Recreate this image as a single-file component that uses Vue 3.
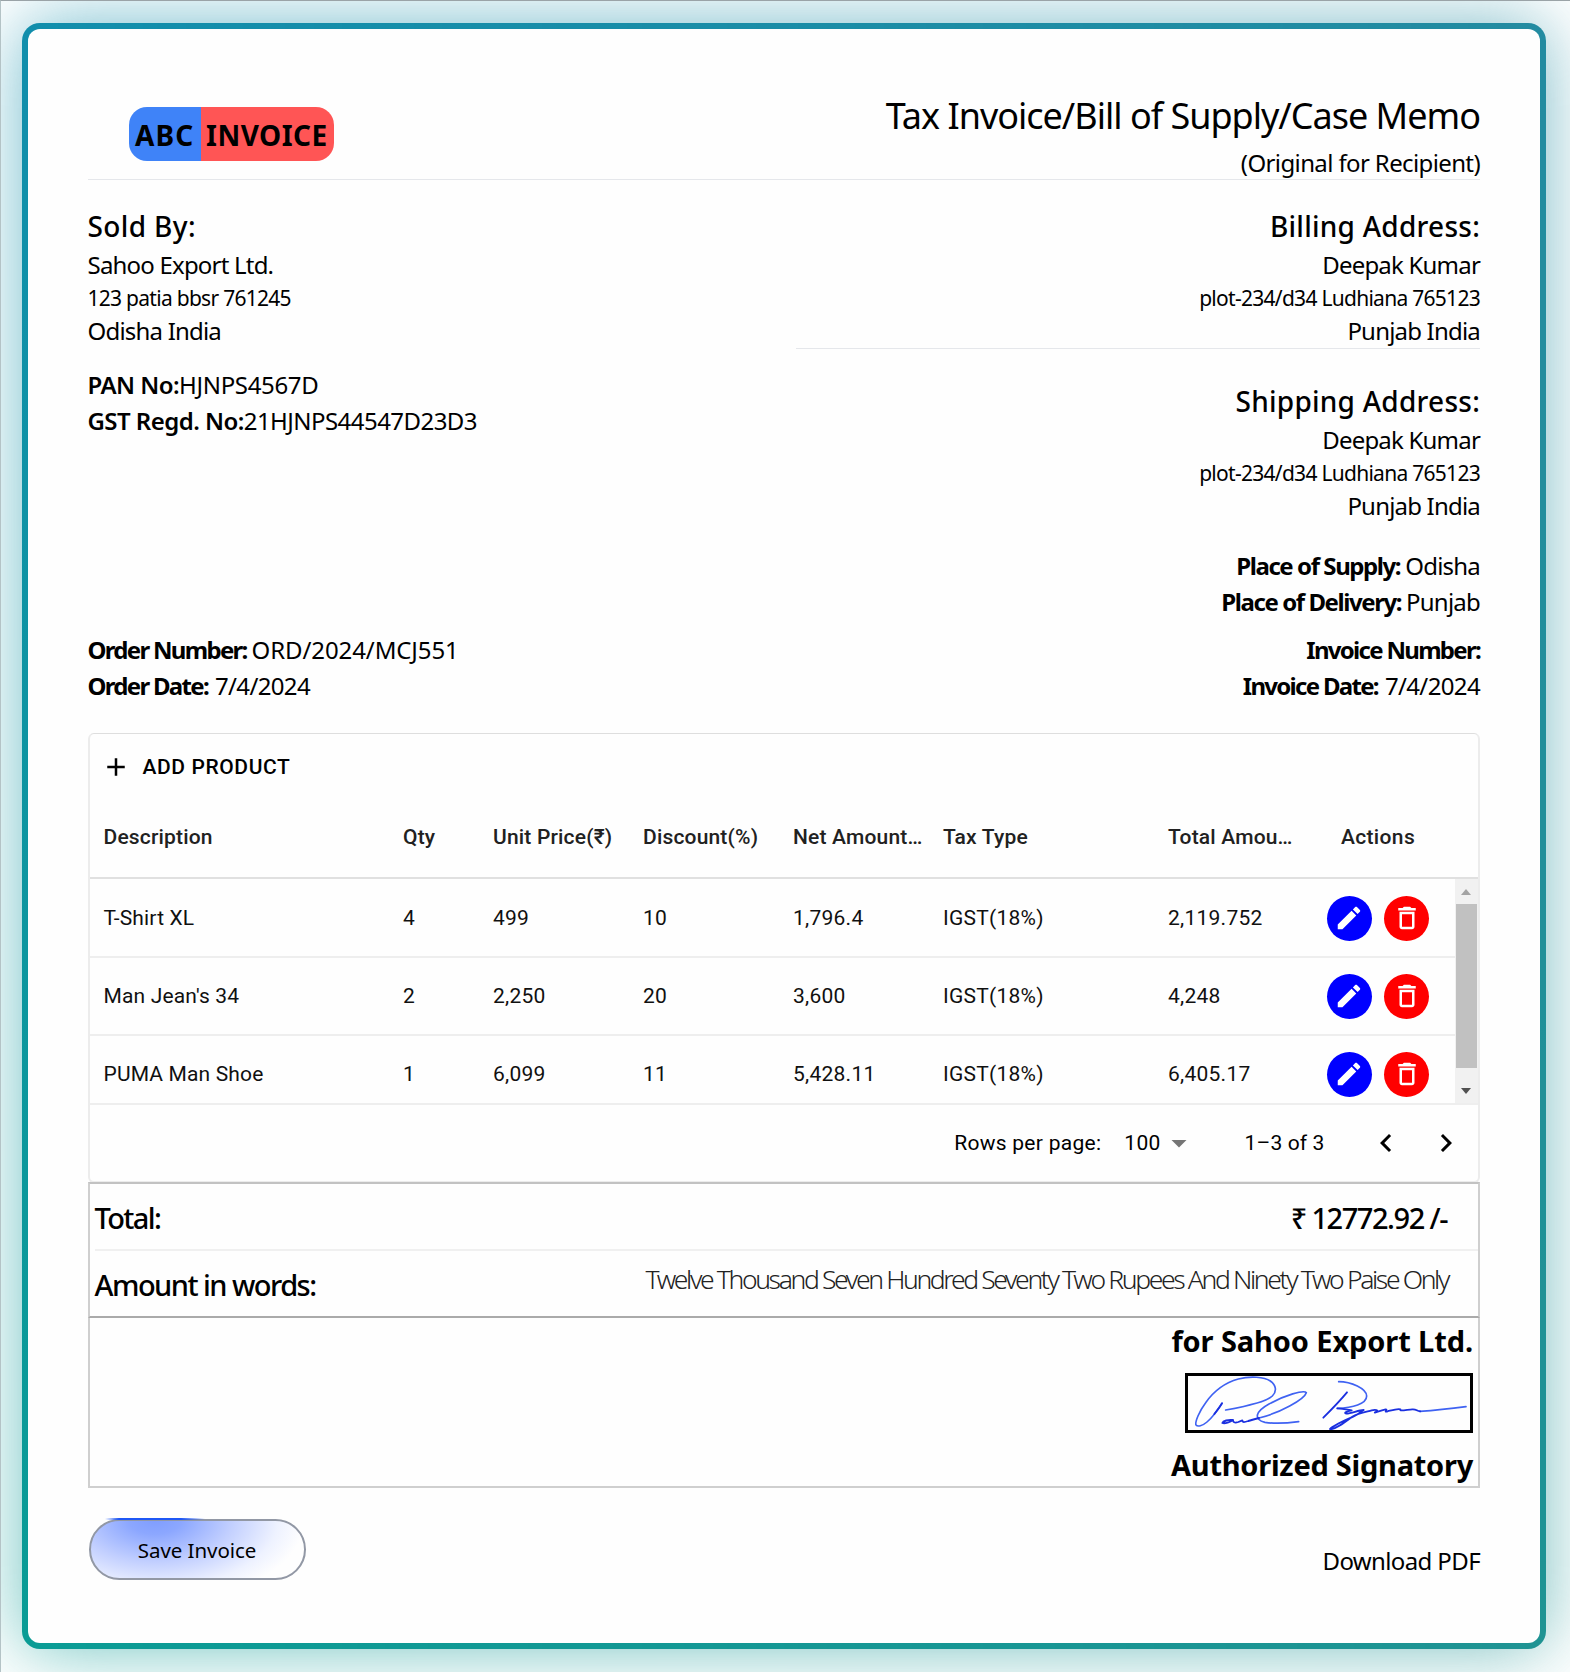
<script setup>
const columns = ['Description', 'Qty', 'Unit Price(₹)', 'Discount(%)', 'Net Amount…', 'Tax Type', 'Total Amou…']
const rows = [
  ['T-Shirt XL', '4', '499', '10', '1,796.4', 'IGST(18%)', '2,119.752'],
  ["Man Jean's 34", '2', '2,250', '20', '3,600', 'IGST(18%)', '4,248'],
  ['PUMA Man Shoe', '1', '6,099', '11', '5,428.11', 'IGST(18%)', '6,405.17'],
]
</script>

<template>
  <div class="page">
    <div class="frame">
      <main class="sheet">
        <header class="top">
          <div class="logo"><span class="logo-a">ABC</span><span class="logo-b">INVOICE</span></div>
          <div class="heading">
            <h1>Tax Invoice/Bill of Supply/Case Memo</h1>
            <p>(Original for Recipient)</p>
          </div>
        </header>

        <section class="parties">
          <div class="seller">
            <h2>Sold By:</h2>
            <p class="name">Sahoo Export Ltd.</p>
            <p class="street">123 patia bbsr 761245</p>
            <p class="region">Odisha India</p>
            <div class="tax">
              <p><b>PAN No:</b><span class="pan">HJNPS4567D</span></p>
              <p><b>GST Regd. No:</b><span>21HJNPS44547D23D3</span></p>
            </div>
          </div>
          <div class="buyer">
            <div class="billing">
              <h2>Billing Address:</h2>
              <p class="name">Deepak Kumar</p>
              <p class="street">plot-234/d34 Ludhiana 765123</p>
              <p class="region">Punjab India</p>
            </div>
            <div class="shipping">
              <h2>Shipping Address:</h2>
              <p class="name">Deepak Kumar</p>
              <p class="street">plot-234/d34 Ludhiana 765123</p>
              <p class="region">Punjab India</p>
            </div>
            <div class="pairs places">
              <p><b class="place">Place of Supply:</b><span>Odisha</span></p>
              <p><b class="place">Place of Delivery:</b><span>Punjab</span></p>
            </div>
          </div>
        </section>

        <section class="refs">
          <div class="pairs">
            <p><b>Order Number:</b><span class="order">ORD/2024/MCJ551</span></p>
            <p><b>Order Date:</b><span class="date">7/4/2024</span></p>
          </div>
          <div class="pairs right">
            <p><b>Invoice Number:</b></p>
            <p><b>Invoice Date:</b><span class="date">7/4/2024</span></p>
          </div>
        </section>

        <section class="grid">
          <button class="add">
            <svg viewBox="0 0 24 24"><path d="M19 13h-6v6h-2v-6H5v-2h6V5h2v6h6v2z" /></svg>
            <span>ADD PRODUCT</span>
          </button>
          <div class="row head">
            <span v-for="c in columns" :key="c" class="cell">{{ c }}</span>
            <span class="actions-title">Actions</span>
          </div>
          <div class="body">
            <div class="rows">
              <div v-for="r in rows" :key="r[0]" class="row item">
                <span v-for="(v, i) in r" :key="i" class="cell">{{ v }}</span>
                <span class="actions">
                  <button class="round edit"><svg viewBox="0 0 24 24"><path d="M3 17.25V21h3.75L17.81 9.94l-3.75-3.75L3 17.25zM20.71 7.04c.39-.39.39-1.02 0-1.41l-2.34-2.34c-.39-.39-1.02-.39-1.41 0l-1.83 1.83 3.75 3.75 1.83-1.83z" /></svg></button>
                  <button class="round remove"><svg viewBox="0 0 24 24"><path d="M6 19c0 1.1.9 2 2 2h8c1.1 0 2-.9 2-2V7H6v12zM8 9h8v10H8V9zm7.5-5l-1-1h-5l-1 1H5v2h14V4h-3.5z" /></svg></button>
                </span>
              </div>
            </div>
            <div class="scrollbar">
              <i class="up"></i>
              <i class="thumb"></i>
              <i class="down"></i>
            </div>
          </div>
          <footer class="pager">
            <span class="rpp">Rows per page:</span>
            <span class="size">100</span>
            <svg class="caret" viewBox="0 0 24 24"><path d="M7 10l5 5 5-5z" /></svg>
            <span class="range">1–3 of 3</span>
            <svg class="prev" viewBox="0 0 24 24"><path d="M15.41 16.59 10.83 12l4.58-4.59L14 6l-6 6 6 6z" /></svg>
            <svg class="next" viewBox="0 0 24 24"><path d="M8.59 16.59 13.17 12 8.59 7.41 10 6l6 6-6 6z" /></svg>
          </footer>
        </section>

        <section class="totals">
          <div class="sum"><span class="label-total">Total:</span><span class="money">₹ 12772.92 /-</span></div>
          <div class="words">
            <span class="label-words">Amount in words:</span>
            <span class="spelled">Twelve Thousand Seven Hundred Seventy Two Rupees And Ninety Two Paise Only</span>
          </div>
        </section>

        <section class="sign">
          <strong class="for">for Sahoo Export Ltd.</strong>
          <svg class="signature" viewBox="55 46 846 162" preserveAspectRatio="none" fill="none" stroke-linecap="round" stroke-linejoin="round">
            <g stroke="#3f62f2" stroke-width="5">
              <path d="M157 128C146 146 130 168 112 184C98 196 84 199 79 193C75 184 90 150 108 126C132 92 166 66 206 55C240 46 284 48 302 61C320 74 322 92 308 106C290 124 222 138 168 148" />
              <path d="M507 63C545 63 590 84 591 106C591 130 548 141 503 143" />
              <path d="M268 172C330 157 404 116 410 96C404 86 344 104 298 130C258 152 250 176 286 185C318 190 356 187 387 183" />
              <path d="M750 152C800 149 845 144 889 138" />
            </g>
            <g stroke="#1a2fe0" stroke-width="5.5">
              <path d="M157 128C150 140 142 150 134 160" />
              <path d="M190 178C176 176 160 181 158 187C166 190 182 184 190 178C190 184 194 188 206 184L218 179C218 186 224 185 236 181C246 178 256 175 268 172" />
              <path d="M532 95C512 119 484 148 461 171" />
              <path d="M503 143C520 144 534 147 546 149C532 152 520 157 530 159C546 158 566 149 582 148C572 154 568 160 552 167C524 180 490 194 481 205C494 209 524 186 548 168C566 157 592 153 606 149C616 146 630 148 618 154C608 159 630 150 648 146C656 146 640 156 654 152C666 149 684 143 692 146C688 153 712 147 728 146C742 145 740 152 752 152" />
            </g>
          </svg>
          <strong class="auth">Authorized Signatory</strong>
        </section>

        <div class="bottom">
          <button class="save">Save Invoice</button>
          <span class="download">Download PDF</span>
        </div>
      </main>
    </div>
  </div>
</template>

<style>
body { margin: 0; background: #fff; }
</style>

<style scoped>
* { box-sizing: border-box; }
h1, h2, p { margin: 0; font-weight: 400; }
button { font: inherit; color: inherit; border: 0; background: none; padding: 0; }
svg { display: block; fill: currentColor; flex: none; }

.page {
  position: relative;
  isolation: isolate;
  width: 1570px;
  height: 1672px;
  overflow: hidden;
  padding: 22px 0 0 20.5px;
  border-top: 1px solid #9aa3a7;
  border-left: 1px solid #b4c3c6;
  background: #fff;
  color: #000;
  font-family: "Noto Sans", "Open Sans", sans-serif;
}
.frame {
  position: relative;
  width: 1524.5px;
  height: 1626px;
  padding: 6px;
  border-radius: 18px;
  background: linear-gradient(to right, rgba(60, 135, 145, 0), rgba(60, 135, 145, .42)), linear-gradient(#118eac, #0a9c95);
}
.frame::before {
  content: "";
  position: absolute;
  z-index: -1;
  inset: 0;
  border-radius: 18px;
  background: inherit;
  filter: blur(36px);
  opacity: .6;
}
.sheet {
  height: 100%;
  padding: 0 60px 0 60px;
  border-radius: 12px;
  background: #fefefe;
}

.top {
  display: flex;
  justify-content: space-between;
  height: 151px;
  border-bottom: 1px solid #e5e7eb;
}
.logo {
  display: flex;
  width: 205px;
  height: 54px;
  margin: 78px 0 0 41.5px;
  border-radius: 18px;
  overflow: hidden;
  font-size: 28px;
  font-weight: 700;
  line-height: 56px;
}
.logo-a { width: 71.5px; padding-left: 6px; background: #3f83f8; letter-spacing: 1.15px; }
.logo-b { flex: 1; padding-left: 5.5px; background: #ff5555; letter-spacing: .5px; }
.heading { padding-top: 61px; text-align: right; }
h1 { font-size: 36px; line-height: 51px; letter-spacing: -1px; }
.heading p { font-size: 24px; line-height: 44px; letter-spacing: -.62px; }

.parties { display: flex; justify-content: space-between; height: 452px; }
.seller { padding-top: 26px; }
.buyer { width: 684px; text-align: right; }
.billing { padding-top: 26px; height: 169px; border-bottom: 1px solid #e5e7eb; }
.shipping { padding-top: 32px; }
h2 { font-size: 28px; font-weight: 500; line-height: 40px; letter-spacing: .38px; }
.buyer h2 { letter-spacing: .25px; }
.name { font-size: 24px; line-height: 37px; letter-spacing: -.8px; }
.street { font-size: 21px; line-height: 31px; margin-bottom: -2px; letter-spacing: -.72px; }
.region { font-size: 24px; line-height: 37px; letter-spacing: -.8px; }
.tax { margin-top: 18px; font-size: 24px; line-height: 36px; letter-spacing: -.55px; }
.tax b { font-weight: 600; }
.pan { letter-spacing: -.34px; }
.pairs { font-size: 24px; line-height: 36px; }
.pairs p { white-space: nowrap; }
.pairs b { font-weight: 700; letter-spacing: -1.7px; }
.pairs b.place { letter-spacing: -1.42px; }
.pairs span { margin-left: 5px; letter-spacing: -.78px; }
.pairs .order { letter-spacing: -.1px; }
.pairs .date { margin-left: 7px; letter-spacing: -.64px; }
.places { margin-top: 24px; }
.refs { display: flex; justify-content: space-between; height: 101px; }
.right { text-align: right; }

.grid {
  height: 450px;
  border: 2px solid #ececec;
  border-top: 1px solid #dedede;
  border-radius: 6px;
  font-family: Roboto, sans-serif;
  font-size: 21px;
}
.add {
  display: flex;
  align-items: center;
  gap: 12px;
  height: 66px;
  padding-left: 11px;
  font-weight: 500;
  letter-spacing: .6px;
}
.add svg { width: 30px; height: 30px; }
.row {
  display: grid;
  grid-template-columns: 298px 90px 150px 150px 150px 225px 150px 150px;
  align-items: center;
}
.cell { padding-left: 15.5px; white-space: nowrap; letter-spacing: .25px; }
.cell:first-child { padding-left: 14px; letter-spacing: .15px; }
.head {
  height: 79px;
  padding-bottom: 3px;
  border-bottom: 2px solid #e0e0e0;
  color: #212121;
  font-weight: 500;
}
.head .cell { letter-spacing: .18px; }
.actions-title { text-align: center; letter-spacing: .36px; padding-left: 1px; }
.body { display: flex; height: 224px; overflow: hidden; }
.rows { width: 1365px; flex: none; padding-top: 1px; }
.item { height: 78px; border-bottom: 2px solid #eee; color: #101010; }
.actions { display: flex; gap: 12px; padding-left: 24px; color: #fff; }
.round { display: flex; align-items: center; justify-content: center; flex: none; width: 45px; height: 45px; border-radius: 50%; }
.round svg { width: 30px; height: 30px; }
.edit { background: #00f; }
.remove { background: #f00; }
.remove svg { margin-left: 1px; }
.scrollbar {
  display: flex;
  flex-direction: column;
  align-items: center;
  flex: 1;
  background: #f1f1f1;
}
.up, .down { width: 0; border: 5.5px solid transparent; }
.up { margin-top: 4.5px; border-bottom: 6px solid #a3a3a3; }
.thumb { width: 21px; height: 164px; margin-top: 9.5px; background: #c1c1c1; }
.down { margin-top: 20px; border-top: 6px solid #505050; }
.pager {
  display: flex;
  align-items: center;
  justify-content: flex-end;
  height: 78px;
  padding: 0 14px 0 0;
  border-top: 2px solid #eee;
  letter-spacing: .28px;
}
.pager svg { width: 36px; height: 36px; }
.rpp { margin-right: 23px; }
.caret { color: #757575; }
.range { margin: 0 43px 0 48px; letter-spacing: .13px; }
.next { margin-left: 24.5px; }

.totals {
  height: 136px;
  margin-top: -1px;
  border: 2px solid #cfcfcf;
  border-top-color: #c2c2c2;
  border-bottom-color: #aaa;
  padding-left: 5px;
}
.sum {
  display: flex;
  justify-content: space-between;
  height: 67px;
  padding-right: 31px;
  border-bottom: 2px solid #f0f0f0;
  font-size: 29px;
  font-weight: 500;
  line-height: 68px;
}
.label-total { letter-spacing: -1.6px; }
.money { letter-spacing: -1.45px; word-spacing: -.5px; }
.words { display: flex; justify-content: space-between; padding-right: 30px; white-space: nowrap; }
.label-words { font-size: 29px; font-weight: 500; line-height: 68px; letter-spacing: -1.53px; }
.spelled { font-size: 26.5px; font-weight: 300; line-height: 56px; letter-spacing: -2.36px; color: #222; }
.sign {
  display: flex;
  flex-direction: column;
  align-items: flex-end;
  height: 170px;
  padding-right: 5px;
  border: 2px solid #cfcfcf;
  border-top: 0;
  font-size: 29px;
}
.for { line-height: 46px; letter-spacing: -.1px; }
.auth { line-height: 42px; letter-spacing: -.25px; margin-top: 11px; }
.signature { width: 288px; height: 60px; margin: 8.5px 0 0; border: 3px solid #000; fill: none; }

.bottom { display: flex; justify-content: space-between; padding-top: 31px; }
.save {
  position: relative;
  width: 217px;
  height: 61px;
  margin-left: 1px;
  border: 2px solid #9298a5;
  border-radius: 31px;
  background: radial-gradient(150px 84px at 64px -2px, #7f9dff 0%, #8ca7ff 18%, #c3d0ff 52%, #eef2ff 82%, #fefefe 100%);
  font-size: 20.5px;
  letter-spacing: -.06px;
}
.save::before {
  content: "";
  position: absolute;
  left: 14px;
  top: -3px;
  width: 100px;
  height: 2px;
  background: linear-gradient(to right, transparent, #1f57f5 14%, #1f57f5 76%, transparent);
}
.download { font-size: 24px; line-height: 84px; letter-spacing: -.62px; }
</style>
